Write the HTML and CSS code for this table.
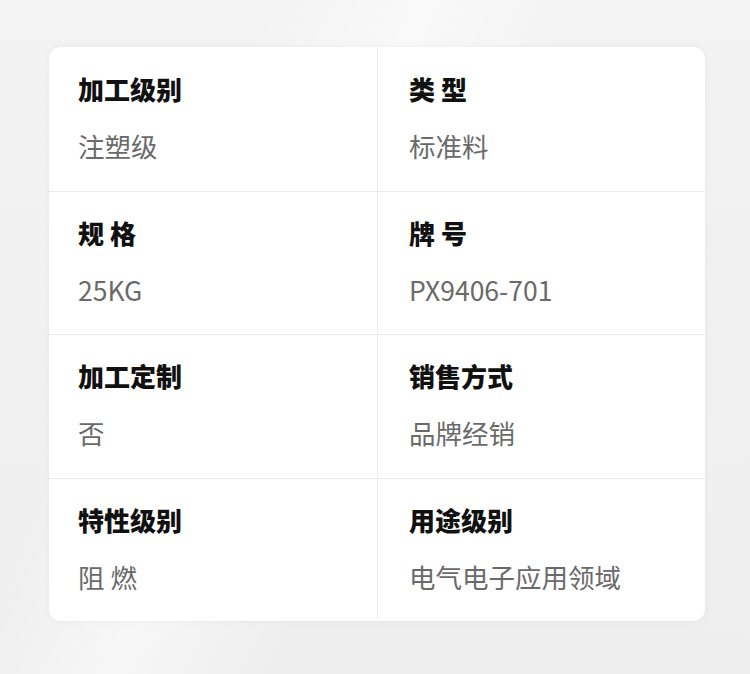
FILE: index.html
```html
<!DOCTYPE html>
<html lang="zh">
<head>
<meta charset="utf-8">
<link rel="stylesheet" href="styles.css">
</head>
<body>
<div class="page">
  <div class="card">
    <div class="cell"><div class="label">加工级别</div><div class="value">注塑级</div></div>
    <div class="cell"><div class="label">类 型</div><div class="value">标准料</div></div>
    <div class="cell"><div class="label">规 格</div><div class="value">25KG</div></div>
    <div class="cell"><div class="label">牌 号</div><div class="value">PX9406-701</div></div>
    <div class="cell"><div class="label">加工定制</div><div class="value">否</div></div>
    <div class="cell"><div class="label">销售方式</div><div class="value">品牌经销</div></div>
    <div class="cell"><div class="label">特性级别</div><div class="value">阻 燃</div></div>
    <div class="cell"><div class="label">用途级别</div><div class="value">电气电子应用领域</div></div>
  </div>
</div>
</body>
</html>
```
FILE: styles.css
```css
html, body {
  margin: 0;
  padding: 0;
}
body {
  width: 750px;
  height: 674px;
  overflow: hidden;
  font-family: "Noto Sans CJK SC", "Noto Sans", sans-serif;
  background: #efefef;
}
.page {
  width: 750px;
  height: 674px;
  box-sizing: border-box;
  padding: 47px 45px 0 49px;
  background:
    linear-gradient(115deg, rgba(255,255,255,0) 25%, rgba(255,255,255,0.5) 40%, rgba(255,255,255,0) 55%),
    linear-gradient(180deg, #f3f3f3 0%, #eeeeee 100%);
}
.card {
  width: 656px;
  height: 574px;
  background: #ffffff;
  border-radius: 12px;
  box-shadow: 0 0 6px rgba(0,0,0,0.05);
  display: grid;
  grid-template-columns: 328px 328px;
  grid-template-rows: repeat(4, 1fr);
  overflow: hidden;
}
.cell {
  box-sizing: border-box;
  padding: 26px 20px 0 29px;
  border-top: 1px solid #ececec;
}
.cell:nth-child(-n+2) {
  border-top-color: transparent;
}
.cell:nth-child(even) {
  border-left: 1px solid #ececec;
  padding-left: 31px;
}
.label {
  font-size: 26px;
  line-height: 30px;
  font-weight: 900;
  color: #111111;
}
.value {
  margin-top: 27px;
  font-size: 26.5px;
  line-height: 30px;
  font-weight: 400;
  color: #6a6a6a;
}
```
